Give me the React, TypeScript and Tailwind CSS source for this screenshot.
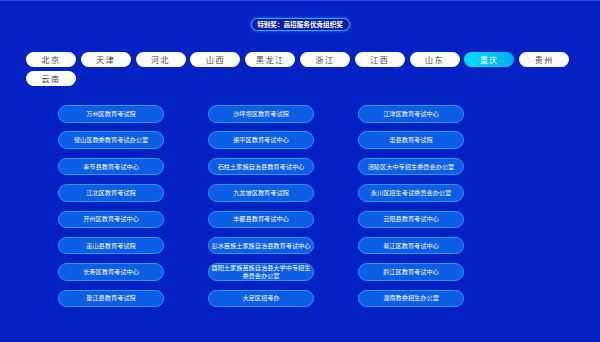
const provinces = ["北京", "天津", "河北", "山西", "黑龙江", "浙江", "江西", "山东", "重庆", "贵州", "云南"];

const offices = [
  "万州区教育考试院",
  "沙坪坝区教育考试院",
  "江津区教育考试中心",
  "璧山区教委教育考试办公室",
  "梁平区教育考试中心",
  "忠县教育考试院",
  "奉节县教育考试中心",
  "石柱土家族自治县教育考试中心",
  "涪陵区大中专招生委员会办公室",
  "江北区教育考试院",
  "九龙坡区教育考试院",
  "永川区招生考试委员会办公室",
  "开州区教育考试中心",
  "丰都县教育考试中心",
  "云阳县教育考试中心",
  "巫山县教育考试院",
  "彭水苗族土家族自治县教育考试中心",
  "綦江区教育考试中心",
  "长寿区教育考试中心",
  "酉阳土家族苗族自治县大学中专招生委员会办公室",
  "黔江区教育考试中心",
  "垫江县教育考试院",
  "大足区招考办",
  "潼南教委招生办公室",
];

export default function App() {
  return (
    <div
      className="h-[342px] w-[600px] overflow-hidden border-t border-[#2c4ee0] bg-[#0422c4]"
      style={{ fontFamily: '"Noto Sans CJK SC", "Noto Sans", sans-serif' }}
    >
      <div className="flex justify-center pt-[17px]">
        <div className="flex h-[13px] w-[99px] items-center justify-center rounded-full border border-[#3aa6ff] bg-[#0a1ca6] text-[6.6px] font-bold leading-none text-white shadow-[0_0_3px_#2a8cff]">
          特别奖：高招服务优秀组织奖
        </div>
      </div>

      <div className="mt-[21px] flex w-[576px] flex-wrap gap-x-[4.8px] gap-y-[4px] pl-[26px]">
        {provinces.map((p) => (
          <div
            key={p}
            className={
              p === "重庆"
                ? "flex h-[15px] w-[50px] items-center justify-center rounded-full bg-gradient-to-r from-[#00e0fa] to-[#00aef2] text-[8px] leading-none tracking-[1.5px] text-white"
                : "flex h-[15px] w-[50px] items-center justify-center rounded-full bg-white text-[8px] leading-none tracking-[1.5px] text-[#444]"
            }
          >
            {p}
          </div>
        ))}
      </div>

      <div className="mt-[19px] grid grid-cols-[106px_106px_106px] gap-x-[44px] gap-y-[8.9px] pl-[58px]">
        {offices.map((o) => (
          <div
            key={o}
            className="flex h-[17.5px] items-center justify-center rounded-full border border-[#2a9af8] bg-[#0c5ee6] px-px text-center text-[6.2px] leading-[8px] text-white"
          >
            {o}
          </div>
        ))}
      </div>
    </div>
  );
}
